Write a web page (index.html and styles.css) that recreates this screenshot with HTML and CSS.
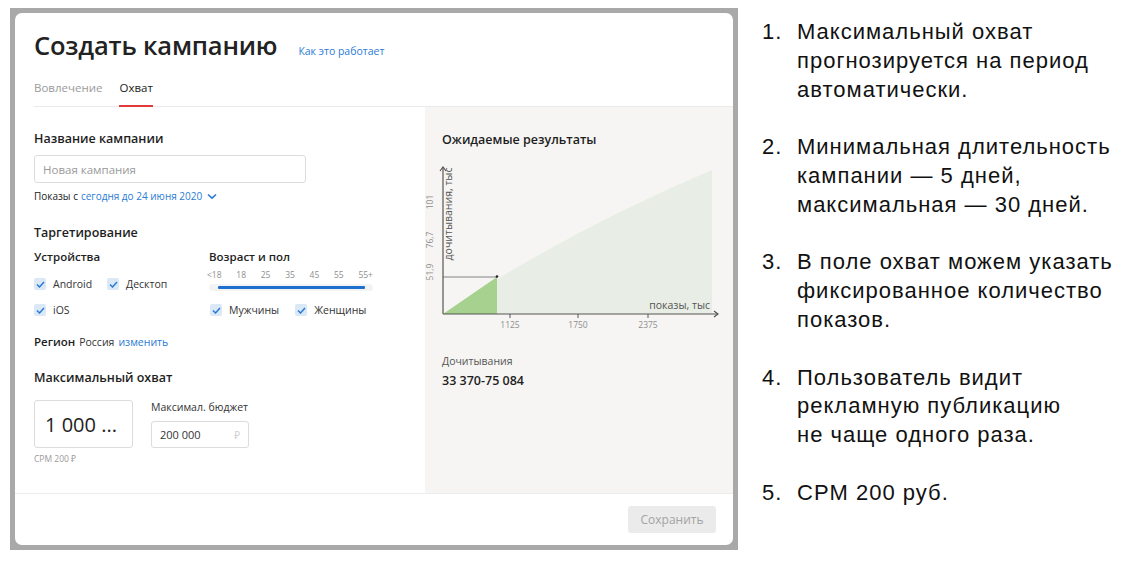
FILE: index.html
```html
<!DOCTYPE html>
<html lang="ru">
<head>
    <meta charset="UTF-8">
    <title>Создать кампанию</title>
    <link rel="stylesheet" href="styles.css">
</head>
<body>
    <div class="frame">
        <div class="card">
            <div class="head">
                <div class="title-row">
                    <h1 class="title">Создать кампанию</h1>
                    <a class="link how">Как это работает</a>
                </div>
                <div class="tabs">
                    <div class="tab">Вовлечение</div>
                    <div class="tab active">Охват</div>
                </div>
            </div>

            <div class="body">
                <div class="form">
                    <div class="label-b">Название кампании</div>
                    <div class="input name-input">Новая кампания</div>
                    <div class="dates">Показы с <span class="link">сегодня до 24 июня 2020</span>
                        <svg class="chev" width="10" height="7" viewBox="0 0 10 7"><path d="M1 1.5 L5 5.2 L9 1.5" fill="none" stroke="#2b7bd6" stroke-width="1.6"/></svg>
                    </div>

                    <div class="label-b targeting">Таргетирование</div>
                    <div class="target-grid">
                        <div class="devices">
                            <div class="label-m">Устройства</div>
                            <div class="dev-grid">
                                <div class="check"><span class="cb"><svg width="9" height="7" viewBox="0 0 9 7"><path d="M1 3.5 L3.5 6 L8 1" fill="none" stroke="#2b7bd6" stroke-width="1.5"/></svg></span>Android</div>
                                <div class="check"><span class="cb"><svg width="9" height="7" viewBox="0 0 9 7"><path d="M1 3.5 L3.5 6 L8 1" fill="none" stroke="#2b7bd6" stroke-width="1.5"/></svg></span>Десктоп</div>
                                <div class="check"><span class="cb"><svg width="9" height="7" viewBox="0 0 9 7"><path d="M1 3.5 L3.5 6 L8 1" fill="none" stroke="#2b7bd6" stroke-width="1.5"/></svg></span>iOS</div>
                            </div>
                        </div>
                        <div class="age">
                            <div class="label-m">Возраст и пол</div>
                            <div class="ages">
                                <span>&lt;18</span><span>18</span><span>25</span><span>35</span><span>45</span><span>55</span><span>55+</span>
                            </div>
                            <div class="track"><div class="range"></div></div>
                            <div class="genders">
                                <div class="check"><span class="cb"><svg width="9" height="7" viewBox="0 0 9 7"><path d="M1 3.5 L3.5 6 L8 1" fill="none" stroke="#2b7bd6" stroke-width="1.5"/></svg></span>Мужчины</div>
                                <div class="check"><span class="cb"><svg width="9" height="7" viewBox="0 0 9 7"><path d="M1 3.5 L3.5 6 L8 1" fill="none" stroke="#2b7bd6" stroke-width="1.5"/></svg></span>Женщины</div>
                            </div>
                        </div>
                    </div>

                    <div class="region"><span class="label-m">Регион</span> <span class="region-val">Россия</span> <span class="link">изменить</span></div>

                    <div class="label-b reach-title">Максимальный охват</div>
                    <div class="reach-row">
                        <div class="reach-col">
                            <div class="big-input">1 000 ...</div>
                            <div class="cpm">CPM 200 ₽</div>
                        </div>
                        <div class="budget">
                            <div class="budget-label">Максимал. бюджет</div>
                            <div class="input budget-input"><span>200 000</span><span class="rub">₽</span></div>
                        </div>
                    </div>
                </div>

                <div class="results">
                    <div class="label-b">Ожидаемые результаты</div>
                    <svg class="chart" width="308" height="180" viewBox="0 0 308 180">
                        <path d="M18 157 Q140 75 287 13 L287 157 Z" fill="#e8eee5"/>
                        <path d="M18 157 L72 120 L72 157 Z" fill="#a6d18f"/>
                        <line x1="18" y1="120" x2="72" y2="120" stroke="#666" stroke-width="0.8"/>
                        <circle cx="72" cy="119.5" r="1.3" fill="#222"/>
                        <line x1="18" y1="157" x2="18" y2="10" stroke="#555" stroke-width="1.2"/>
                        <path d="M15 14 L18 10 L21 14" fill="none" stroke="#555" stroke-width="1.2"/>
                        <line x1="18" y1="157" x2="293" y2="157" stroke="#555" stroke-width="1.2"/>
                        <path d="M289 154 L293 157 L289 160" fill="none" stroke="#555" stroke-width="1.2"/>
                        <line x1="85" y1="157" x2="85" y2="161" stroke="#555"/>
                        <line x1="153" y1="157" x2="153" y2="161" stroke="#555"/>
                        <line x1="223" y1="157" x2="223" y2="161" stroke="#555"/>
                        <text class="tick" x="85" y="171" text-anchor="middle">1125</text>
                        <text class="tick" x="153" y="171" text-anchor="middle">1750</text>
                        <text class="tick" x="223" y="171" text-anchor="middle">2375</text>
                        <text class="axis" x="285" y="152" text-anchor="end">показы, тыс</text>
                        <text class="tick" transform="translate(8 45) rotate(-90)" text-anchor="middle">101</text>
                        <text class="tick" transform="translate(8 83) rotate(-90)" text-anchor="middle">76,7</text>
                        <text class="tick" transform="translate(8 115) rotate(-90)" text-anchor="middle">51,9</text>
                        <text class="axis" transform="translate(27 57) rotate(-90)" text-anchor="middle">дочитывания, тыс</text>
                    </svg>
                    <div class="reads-label">Дочитывания</div>
                    <div class="label-b reads">33 370-75 084</div>
                </div>
            </div>

            <div class="foot">
                <button class="save">Сохранить</button>
            </div>
        </div>
    </div>

    <ol class="notes">
        <li><span class="num">1.</span><span>Максимальный охват<br>прогнозируется на период<br>автоматически.</span></li>
        <li><span class="num">2.</span><span>Минимальная длительность<br>кампании — 5 дней,<br>максимальная — 30 дней.</span></li>
        <li><span class="num">3.</span><span>В поле охват можем указать<br>фиксированное количество<br>показов.</span></li>
        <li><span class="num">4.</span><span>Пользователь видит<br>рекламную публикацию<br>не чаще одного раза.</span></li>
        <li><span class="num">5.</span><span>CPM 200 руб.</span></li>
    </ol>
</body>
</html>
```

FILE: styles.css
```css
* { box-sizing: border-box; margin: 0; padding: 0; }
body {
    background: #ffffff;
    display: flex;
    align-items: flex-start;
    width: 1124px;
    height: 572px;
    overflow: hidden;
    font-family: 'Open Sans', 'Noto Sans', sans-serif;
    color: #222222;
}
.frame {
    flex-shrink: 0;
    margin: 8px 0 0 10px;
    width: 728px;
    height: 542px;
    padding: 5px;
    background: #a9a9a9;
}
.card {
    background: #ffffff;
    border-radius: 7px;
    height: 100%;
    display: flex;
    flex-direction: column;
    overflow: hidden;
}
.link { color: #2b7bd6; }

/* header */
.head {
    padding: 15px 0 0 19px;
}
.title-row { display: flex; align-items: baseline; gap: 21px; }
.title {
    font-size: 25.5px;
    font-weight: 600;
    line-height: 34px;
    color: #222222;
    letter-spacing: -0.2px;
}
.how { font-size: 10.5px; }
.tabs {
    display: flex;
    gap: 17px;
    margin-top: 18px;
    border-bottom: 1px solid #ebebeb;
}
.tab {
    font-size: 11.5px;
    line-height: 16px;
    color: #9a9a9a;
    padding-bottom: 9px;
    border-bottom: 2px solid transparent;
    margin-bottom: -1px;
}
.tab.active { color: #222222; border-bottom-color: #e2393e; }

/* body */
.body { display: flex; flex: 1; border-bottom: 1px solid #ececec; }
.form { flex: 0 0 410px; padding: 24px 0 0 19px; }
.label-b { font-size: 12.5px; font-weight: 600; line-height: 16px; color: #1e1e1e; }
.label-m { font-size: 11.5px; font-weight: 600; line-height: 16px; color: #1e1e1e; }
.input {
    border: 1px solid #dcdcdc;
    border-radius: 3px;
    font-size: 11.5px;
    display: flex;
    align-items: center;
    padding: 0 8px;
}
.name-input { width: 272px; height: 28px; margin-top: 8px; color: #9a9a9a; }
.dates { font-size: 10px; line-height: 14px; margin-top: 6px; display: flex; align-items: center; gap: 3px; }
.chev { margin-left: 2px; }
.targeting { margin-top: 22px; }
.target-grid { display: flex; margin-top: 8px; }
.devices { width: 175px; }
.dev-grid {
    display: grid;
    grid-template-columns: 73px auto;
    row-gap: 12px;
    margin-top: 12px;
}
.check { display: flex; align-items: center; gap: 7px; font-size: 10.5px; line-height: 14px; color: #333333; }
.cb {
    width: 12px; height: 12px;
    background: #dbe8f6;
    border-radius: 2px;
    display: flex; align-items: center; justify-content: center;
}
.age { width: 164px; }
.ages {
    display: flex;
    justify-content: space-between;
    font-size: 8.5px;
    line-height: 11px;
    color: #8e8e8e;
    margin-left: -2px;
    margin-top: 4px;
}
.track {
    height: 7px;
    background: #f3f3f3;
    border-radius: 4px;
    margin-top: 4px;
    padding: 2px 8px 0 9px;
}
.range { height: 3px; background: #1d6fd0; border-radius: 1px; }
.genders { display: flex; gap: 16px; margin-top: 12px; margin-left: 1px; }
.region { margin-top: 17px; display: flex; align-items: baseline; gap: 4px; font-size: 10.5px; line-height: 16px; }
.region-val { color: #333333; }
.reach-title { margin-top: 20px; }
.reach-row { display: flex; gap: 18px; margin-top: 14px; }
.big-input {
    width: 99px; height: 48px;
    border: 1px solid #dcdcdc;
    border-radius: 3px;
    font-size: 20px;
    display: flex; align-items: center;
    padding-left: 10px;
    color: #222222;
}
.cpm { font-size: 8.5px; color: #9a9a9a; margin-top: 5px; }
.budget-label { font-size: 10.5px; line-height: 14px; color: #333333; }
.budget-input { width: 98px; height: 27px; margin-top: 7px; justify-content: space-between; color: #333333; font-size: 11px; }
.rub { color: #d0d0d0; font-size: 10px; }

/* results */
.results {
    flex: 1;
    min-width: 0;
    overflow: hidden;
    background: #f6f5f3;
    padding: 25px 17px 0 17px;
}
.chart { display: block; margin: 9px 0 0 -17px; }
.tick { font-family: 'Open Sans', sans-serif; font-size: 8.5px; fill: #8e8e8e; }
.axis { font-family: 'Open Sans', sans-serif; font-size: 10.5px; fill: #555555; }
.reads-label { font-size: 10.5px; line-height: 14px; color: #555555; margin-top: 17px; }
.reads { margin-top: 5px; }

/* footer */
.foot { height: 51px; display: flex; justify-content: flex-end; align-items: center; padding-right: 17px; }
.save {
    width: 88px; height: 27px;
    border: none;
    border-radius: 3px;
    background: #ebebeb;
    color: #a3a3a3;
    font-family: 'Open Sans', sans-serif;
    font-size: 12px;
}

/* notes */
.notes {
    list-style: none;
    margin: 18px 0 0 24px;
    font-family: 'Liberation Sans', Arial, sans-serif;
    font-size: 22px;
    letter-spacing: 1px;
    line-height: 28.8px;
    color: #111111;
}
.notes li { display: flex; margin-bottom: 28.8px; white-space: nowrap; }
.num { width: 35px; flex-shrink: 0; }
```
